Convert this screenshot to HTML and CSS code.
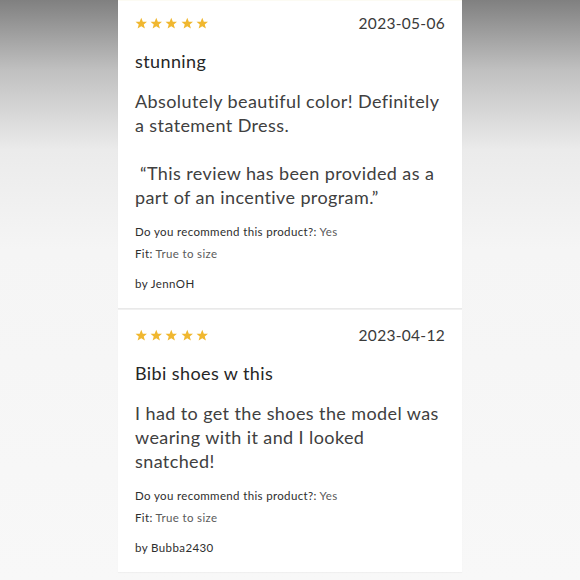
FILE: index.html
```html
<!DOCTYPE html>
<html>
<head>
<meta charset="utf-8">
<link rel="stylesheet" href="styles.css">
</head>
<body>
<div class="column">
  <div class="card first">
    <div class="head">
      <div class="stars">
        <svg viewBox="0 0 24 24"><polygon points="12,1.5 15,9 23,9.3 16.8,14.3 19,22.3 12,17.8 5,22.3 7.2,14.3 1,9.3 9,9"/></svg>
        <svg viewBox="0 0 24 24"><polygon points="12,1.5 15,9 23,9.3 16.8,14.3 19,22.3 12,17.8 5,22.3 7.2,14.3 1,9.3 9,9"/></svg>
        <svg viewBox="0 0 24 24"><polygon points="12,1.5 15,9 23,9.3 16.8,14.3 19,22.3 12,17.8 5,22.3 7.2,14.3 1,9.3 9,9"/></svg>
        <svg viewBox="0 0 24 24"><polygon points="12,1.5 15,9 23,9.3 16.8,14.3 19,22.3 12,17.8 5,22.3 7.2,14.3 1,9.3 9,9"/></svg>
        <svg viewBox="0 0 24 24"><polygon points="12,1.5 15,9 23,9.3 16.8,14.3 19,22.3 12,17.8 5,22.3 7.2,14.3 1,9.3 9,9"/></svg>
      </div>
      <div class="date">2023-05-06</div>
    </div>
    <div class="title">stunning</div>
    <div class="body">Absolutely beautiful color! Definitely a statement Dress.<br><br>&nbsp;“This review has been provided as a part of an incentive program.”</div>
    <div class="meta"><span class="label">Do you recommend this product?:</span> <span class="val">Yes</span></div>
    <div class="meta"><span class="label">Fit:</span> <span class="val">True to size</span></div>
    <div class="by">by JennOH</div>
  </div>
  <div class="card">
    <div class="head">
      <div class="stars">
        <svg viewBox="0 0 24 24"><polygon points="12,1.5 15,9 23,9.3 16.8,14.3 19,22.3 12,17.8 5,22.3 7.2,14.3 1,9.3 9,9"/></svg>
        <svg viewBox="0 0 24 24"><polygon points="12,1.5 15,9 23,9.3 16.8,14.3 19,22.3 12,17.8 5,22.3 7.2,14.3 1,9.3 9,9"/></svg>
        <svg viewBox="0 0 24 24"><polygon points="12,1.5 15,9 23,9.3 16.8,14.3 19,22.3 12,17.8 5,22.3 7.2,14.3 1,9.3 9,9"/></svg>
        <svg viewBox="0 0 24 24"><polygon points="12,1.5 15,9 23,9.3 16.8,14.3 19,22.3 12,17.8 5,22.3 7.2,14.3 1,9.3 9,9"/></svg>
        <svg viewBox="0 0 24 24"><polygon points="12,1.5 15,9 23,9.3 16.8,14.3 19,22.3 12,17.8 5,22.3 7.2,14.3 1,9.3 9,9"/></svg>
      </div>
      <div class="date">2023-04-12</div>
    </div>
    <div class="title">Bibi shoes w this</div>
    <div class="body">I had to get the shoes the model was wearing with it and I looked snatched!</div>
    <div class="meta"><span class="label">Do you recommend this product?:</span> <span class="val">Yes</span></div>
    <div class="meta"><span class="label">Fit:</span> <span class="val">True to size</span></div>
    <div class="by">by Bubba2430</div>
  </div>
</div>
</body>
</html>
```

FILE: styles.css
```css
html, body {
  margin: 0;
  padding: 0;
}
body {
  width: 580px;
  height: 580px;
  overflow: hidden;
  background: linear-gradient(to bottom, #808080 0px, #c0c0c0 70px, #ebebeb 150px, #f5f5f5 250px, #f8f8f8 580px);
  font-family: Lato, "Noto Sans", sans-serif;
  color: #333;
}
.column {
  margin-left: 118px;
  width: 344px;
  display: flex;
  flex-direction: column;
  gap: 2px;
  background: #f1f1f1;
}
.card {
  background: #fff;
  padding: 16px 17px 13px 17px;
  box-shadow: 0 1px 1px rgba(0,0,0,0.03);
}
.card.first {
  margin-top: -2px;
  border-top: 3px solid #fcfbf3;
  padding-top: 13px;
}
.head {
  display: flex;
  justify-content: space-between;
  align-items: center;
  height: 18px;
}
.stars {
  display: flex;
  gap: 2.7px;
}
.stars svg {
  width: 12.5px;
  height: 12.5px;
  fill: #f0b72f;
}
.date {
  font-size: 15.5px;
  line-height: 18px;
  color: #3a3a3a;
  letter-spacing: 0.3px;
}
.title {
  margin-top: 17px;
  font-size: 18px;
  line-height: 24px;
  color: #262626;
  letter-spacing: 0.4px;
}
.body {
  margin-top: 16px;
  font-size: 18px;
  line-height: 24px;
  color: #404040;
  letter-spacing: 0.4px;
}
.meta {
  font-size: 11.5px;
  line-height: 22px;
  letter-spacing: 0.35px;
}
.body + .meta {
  margin-top: 12px;
}
.label {
  color: #2e2e2e;
}
.val {
  color: #5a5a5a;
}
.by {
  margin-top: 8px;
  font-size: 11.5px;
  line-height: 22px;
  color: #2e2e2e;
  letter-spacing: 0.4px;
}
```
